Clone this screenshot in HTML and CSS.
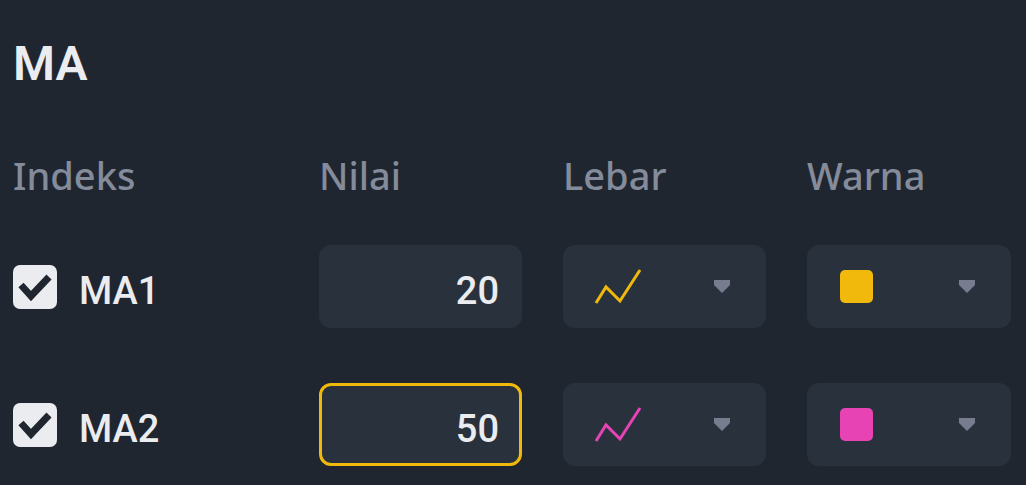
FILE: index.html
```html
<!DOCTYPE html>
<html lang="id">
<head>
    <meta charset="UTF-8">
    <meta name="viewport" content="width=device-width, initial-scale=1.0">
    <title>MA</title>
    <link rel="stylesheet" href="styles.css">
</head>
<body>
    <form class="settings">
        <h1 class="title">MA</h1>
        <table class="ma-table">
            <thead>
                <tr class="row head">
                    <th scope="col">Indeks</th>
                    <th scope="col">Nilai</th>
                    <th scope="col">Lebar</th>
                    <th scope="col">Warna</th>
                </tr>
            </thead>
            <tbody>
                <tr class="row yellow">
                    <td>
                        <label class="check">
                            <input type="checkbox" class="check-box" checked>
                            <svg class="check-mark" viewBox="0 0 44 44"><path d="M8 20l10 11 18-19"/></svg>
                            <span class="check-text">MA1</span>
                        </label>
                    </td>
                    <td><input type="text" inputmode="numeric" class="value" value="20" aria-label="Nilai MA1"></td>
                    <td>
                        <div class="picker">
                            <select class="picker-select" aria-label="Lebar MA1"><option value="1"></option></select>
                            <svg class="line" viewBox="0 0 48 36"><path d="M2 34L12 18 26 32 46 1"/></svg>
                            <svg class="arrow" viewBox="0 0 18 14"><path d="M1 0h16v5l-8 8-8-8z"/></svg>
                        </div>
                    </td>
                    <td>
                        <div class="picker">
                            <select class="picker-select" aria-label="Warna MA1"><option value="yellow"></option></select>
                            <span class="swatch"></span>
                            <svg class="arrow" viewBox="0 0 18 14"><path d="M1 0h16v5l-8 8-8-8z"/></svg>
                        </div>
                    </td>
                </tr>
                <tr class="row pink">
                    <td>
                        <label class="check">
                            <input type="checkbox" class="check-box" checked>
                            <svg class="check-mark" viewBox="0 0 44 44"><path d="M8 20l10 11 18-19"/></svg>
                            <span class="check-text">MA2</span>
                        </label>
                    </td>
                    <td><input type="text" inputmode="numeric" class="value active" value="50" aria-label="Nilai MA2"></td>
                    <td>
                        <div class="picker">
                            <select class="picker-select" aria-label="Lebar MA2"><option value="1"></option></select>
                            <svg class="line" viewBox="0 0 48 36"><path d="M2 34L12 18 26 32 46 1"/></svg>
                            <svg class="arrow" viewBox="0 0 18 14"><path d="M1 0h16v5l-8 8-8-8z"/></svg>
                        </div>
                    </td>
                    <td>
                        <div class="picker">
                            <select class="picker-select" aria-label="Warna MA2"><option value="pink"></option></select>
                            <span class="swatch"></span>
                            <svg class="arrow" viewBox="0 0 18 14"><path d="M1 0h16v5l-8 8-8-8z"/></svg>
                        </div>
                    </td>
                </tr>
            </tbody>
        </table>
    </form>
</body>
</html>
```
FILE: styles.css
```css
* {
    box-sizing: border-box;
}

body {
    margin: 0;
    background-color: #202630;
    color: #eaecef;
    font-family: Roboto, "Liberation Sans", sans-serif;
}

.settings {
    padding: 36px 15px 19px 13px;
}

.title {
    margin: 0;
    font-size: 48px;
    line-height: 56px;
    font-weight: 600;
}

/* table */
.ma-table,
.ma-table thead,
.ma-table tbody {
    display: block;
}

.row {
    display: grid;
    grid-template-columns: 265fr 203fr 203fr 204fr;
    gap: 41px;
    align-items: center;
    margin-bottom: 55px;
}

.row:last-child {
    margin-bottom: 0;
}

.row.head {
    margin: 55px 0 42px;
}

th,
td {
    padding: 0;
    min-width: 0;
}

th {
    color: #848b9b;
    font-family: "Noto Sans", sans-serif;
    font-size: 38px;
    line-height: 56px;
    font-weight: 500;
    text-align: left;
}

.yellow {
    --line-color: #f0b90b;
}

.pink {
    --line-color: #e843b5;
}

/* checkbox */
.check {
    display: grid;
    grid-template-columns: 44px 1fr;
    column-gap: 22px;
    align-items: center;
}

.check-box {
    appearance: none;
    grid-area: 1 / 1;
    width: 44px;
    height: 44px;
    margin: 0;
    border-radius: 7px;
    background-color: #eaecef;
}

.check-mark {
    display: none;
    grid-area: 1 / 1;
    pointer-events: none;
    fill: none;
    stroke: #202630;
    stroke-width: 7;
}

.check-box:checked + .check-mark {
    display: block;
}

.check-text {
    padding-top: 8px;
    font-size: 38px;
    line-height: 44px;
    font-weight: 500;
}

/* fields */
.value {
    display: block;
    width: 100%;
    height: 83px;
    padding: 8px 20px 0;
    border: 3px solid #29313d;
    border-radius: 12px;
    background-color: #29313d;
    color: #eaecef;
    font-family: inherit;
    font-size: 38px;
    font-weight: 500;
    text-align: right;
    outline: none;
}

.value.active,
.value:focus {
    border-color: #f0b90b;
}

.picker {
    display: grid;
    grid-template-columns: 1fr auto;
    align-items: center;
    height: 83px;
    border-radius: 12px;
    background-color: #29313d;
}

.picker-select {
    appearance: none;
    grid-area: 1 / 1 / 2 / 3;
    width: 100%;
    height: 100%;
    border: none;
    border-radius: 12px;
    background-color: transparent;
}

.line,
.swatch,
.arrow {
    grid-row: 1;
    pointer-events: none;
}

.line {
    grid-column: 1;
    width: 48px;
    height: 36px;
    margin-left: 31px;
    fill: none;
    stroke: var(--line-color);
    stroke-width: 3;
}

.swatch {
    grid-column: 1;
    width: 33px;
    height: 33px;
    margin-left: 33px;
    border-radius: 5px;
    background-color: var(--line-color);
}

.arrow {
    grid-column: 2;
    width: 18px;
    height: 14px;
    margin-right: 35px;
    fill: #777d8e;
}
```
